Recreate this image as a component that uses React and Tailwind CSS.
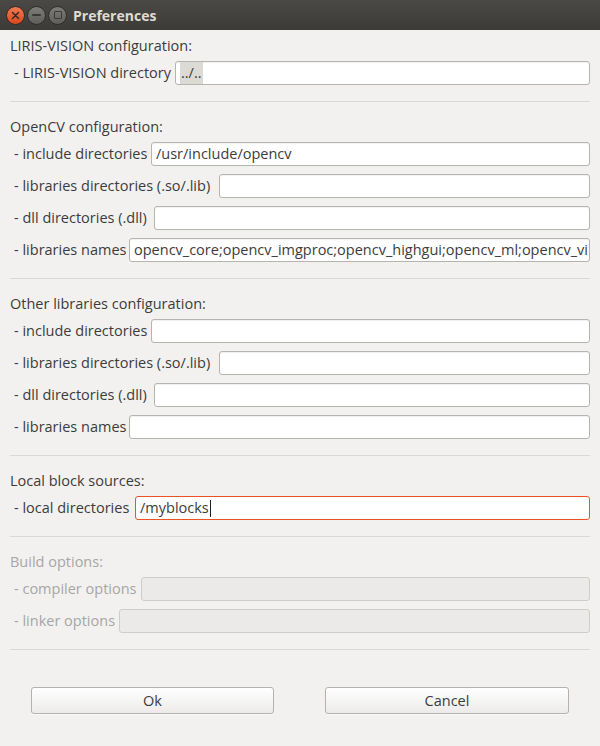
import React from 'react';

const FONT = { fontFamily: '"Open Sans", "Noto Sans", "DejaVu Sans", sans-serif' };

function Field({ label, labelW, value, focused, disabled, selected }) {
  const box = disabled
    ? 'bg-[#ebeae8] border-[#cfcdc8]'
    : focused
    ? 'bg-white border-[#e95420]'
    : 'bg-white border-[#b6b4af] shadow-[inset_0_1px_1px_rgba(0,0,0,0.06)]';
  return (
    <div className="flex items-center h-6">
      <div
        className={`shrink-0 whitespace-nowrap pl-1 ${disabled ? 'text-[#a7a6a3]' : 'text-[#3c3c3c]'}`}
        style={{ width: labelW }}
      >
        - {label}
      </div>
      <div className={`flex-1 min-w-0 h-6 border rounded-[3px] overflow-hidden flex items-center px-[4px] whitespace-nowrap ${box}`}>
        {selected ? (
          <span className="bg-[#dcdad5] px-[1px] text-[#3c3c3c]">{value}</span>
        ) : (
          <span className="text-[#3c3c3c]">{value}</span>
        )}
        {focused && <span className="inline-block w-px h-[17px] bg-[#202020] ml-[1px]" />}
      </div>
    </div>
  );
}

function Section({ title, disabled, children, first }) {
  return (
    <div className={`${first ? 'pt-[7px]' : 'pt-4'} pb-4 border-b border-[#dad8d3]`}>
      <div className={`leading-[18px] mb-[6px] ${disabled ? 'text-[#a7a6a3]' : 'text-[#3c3c3c]'}`}>{title}</div>
      <div className="flex flex-col gap-2">{children}</div>
    </div>
  );
}

export default function App() {
  return (
    <div className="w-[600px] h-[746px] bg-[#f2f1f0] flex flex-col text-[14.5px]" style={FONT}>
      {/* title bar */}
      <div className="h-[30px] shrink-0 bg-gradient-to-b from-[#4a4945] to-[#3c3b37] flex items-center pl-[6px]">
        <div className="flex items-center gap-[1px]">
          <div className="w-[19px] h-[19px] rounded-full bg-gradient-to-b from-[#f27a52] to-[#d9471a] border border-[#3a2a22] flex items-center justify-center">
            <svg width="9" height="9" viewBox="0 0 9 9">
              <path d="M1.5 1.5 L7.5 7.5 M7.5 1.5 L1.5 7.5" stroke="#3b2b24" strokeWidth="1.6" strokeLinecap="round" />
            </svg>
          </div>
          <div className="w-[19px] h-[19px] rounded-full bg-gradient-to-b from-[#7d7c78] to-[#5f5e5a] border border-[#2f2e2b] flex items-center justify-center ml-[1px]">
            <div className="w-[9px] h-[2px] bg-[#3a3936] rounded-sm" />
          </div>
          <div className="w-[19px] h-[19px] rounded-full bg-gradient-to-b from-[#7d7c78] to-[#5f5e5a] border border-[#2f2e2b] flex items-center justify-center ml-[1px]">
            <div className="w-[8px] h-[8px] border-[1.5px] border-[#3a3936] rounded-[1px]" />
          </div>
        </div>
        <div className="ml-[6px] font-bold text-[#dfdbd2] text-[14px]">Preferences</div>
      </div>

      <div className="px-[10px] flex flex-col">
        <Section title="LIRIS-VISION configuration:" first>
          <Field label="LIRIS-VISION directory" labelW={165} value="../.." selected />
        </Section>
        <Section title="OpenCV configuration:">
          <Field label="include directories" labelW={141} value="/usr/include/opencv" />
          <Field label="libraries directories (.so/.lib)" labelW={209} value="" />
          <Field label="dll directories (.dll)" labelW={144} value="" />
          <Field
            label="libraries names"
            labelW={119}
            value="opencv_core;opencv_imgproc;opencv_highgui;opencv_ml;opencv_vi"
          />
        </Section>
        <Section title="Other libraries configuration:">
          <Field label="include directories" labelW={141} value="" />
          <Field label="libraries directories (.so/.lib)" labelW={209} value="" />
          <Field label="dll directories (.dll)" labelW={144} value="" />
          <Field label="libraries names" labelW={119} value="" />
        </Section>
        <Section title="Local block sources:">
          <Field label="local directories" labelW={125} value="/myblocks" focused />
        </Section>
        <Section title="Build options:" disabled>
          <Field label="compiler options" labelW={131} value="" disabled />
          <Field label="linker options" labelW={109} value="" disabled />
        </Section>

        <div className="flex justify-between pt-[37px] px-[21px]">
          <button className="w-[243px] h-[27px] rounded-[3px] border border-[#b4b2ad] bg-gradient-to-b from-[#ffffff] to-[#ecebe9] text-[#3c3c3c] shadow-[0_1px_0_rgba(255,255,255,0.6)]">
            Ok
          </button>
          <button className="w-[244px] h-[27px] rounded-[3px] border border-[#b4b2ad] bg-gradient-to-b from-[#ffffff] to-[#ecebe9] text-[#3c3c3c] shadow-[0_1px_0_rgba(255,255,255,0.6)]">
            Cancel
          </button>
        </div>
      </div>
    </div>
  );
}
